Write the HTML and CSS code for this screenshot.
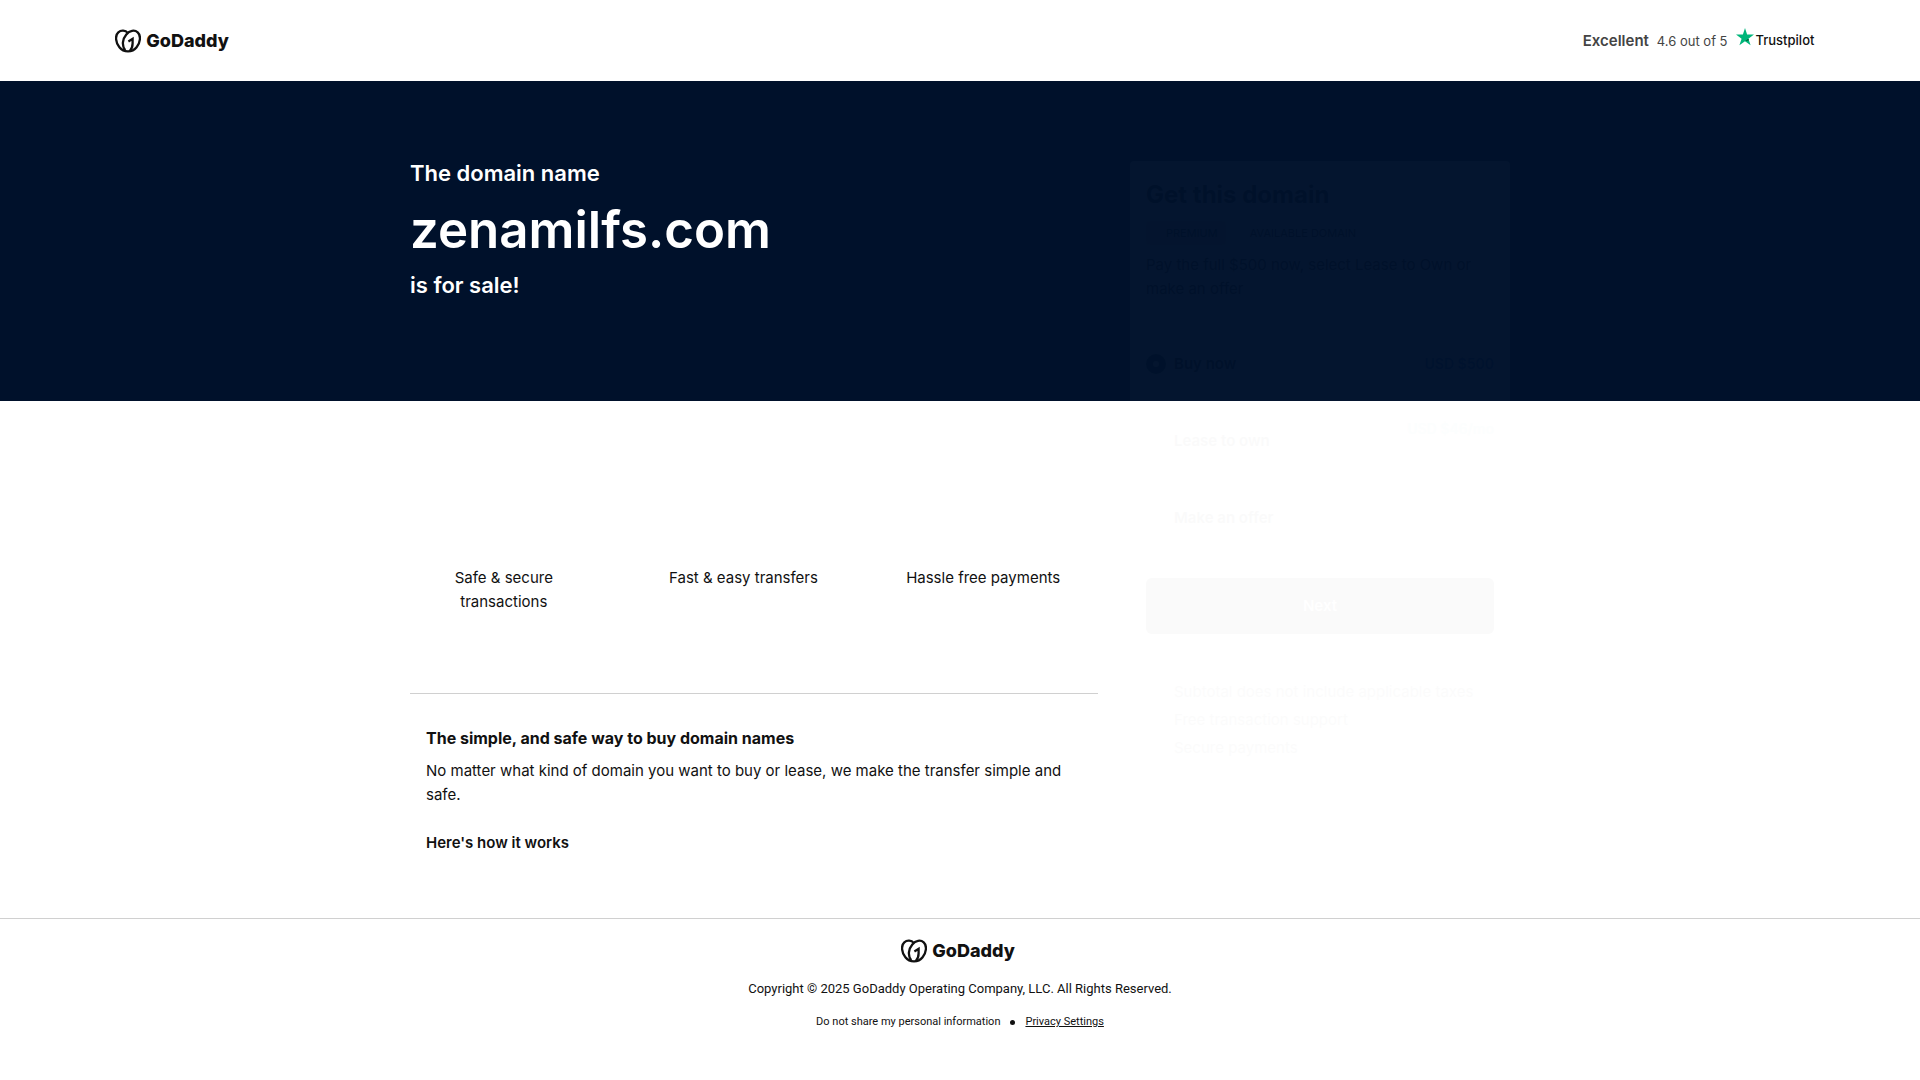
FILE: index.html
```html
<!DOCTYPE html>
<html lang="en">
<head>
<meta charset="utf-8">
<meta name="viewport" content="width=device-width, initial-scale=1">
<title>zenamilfs.com is for sale</title>
<link rel="stylesheet" href="styles.css">
</head>
<body>
<header class="header">
  <div class="logo">
    <svg class="logo-mark" viewBox="0 0 26 24" aria-hidden="true">
      <g fill="none" stroke="#111" stroke-width="2.300">
        <path d="M13 4.200C10.300 1 6 .9 3.300 3.300 -.2 6.500 .6 13.600 4.400 18.200 8.700 23.700 17.300 23.700 21.600 18.200 25.400 13.600 26.200 6.500 22.700 3.300 19.600 .6 14.600 1.400 11.300 5.400 7.400 10 6.600 16.600 10.200 21.300"/>
        <path d="M13.400 12.400 17.600 9.800V14.400C17.600 17.400 16.600 20 14.800 22"/>
      </g>
    </svg>
    <span class="logo-word">GoDaddy</span>
  </div>
  <div class="rating">
    <strong class="rating-label">Excellent</strong>
    <span class="rating-score">4.6 out of 5</span>
    <span class="trustpilot">
      <svg class="trustpilot-star" viewBox="0 0 18 18" aria-hidden="true">
        <path fill="#00b67a" d="M9 0 11.100 6.600H18L12.400 10.700 14.600 17.300 9 13.200 3.400 17.300 5.600 10.700 0 6.600H6.900Z"/>
        <path fill="#005128" d="M12.900 12.200 12.400 10.700 9 13.200Z"/>
      </svg>
      <span class="trustpilot-word">Trustpilot</span>
    </span>
  </div>
</header>

<main class="lander">
  <div class="band"></div>
  <section class="intro">
    <p class="intro-line">The domain name</p>
    <h1 class="domain">zenamilfs.com</h1>
    <p class="intro-line">is for sale!</p>
  </section>

  <form class="card">
    <h2 class="card-title">Get this domain</h2>
    <p class="badges"><span class="badge">PREMIUM</span><span>AVAILABLE DOMAIN</span></p>
    <p class="card-text">Pay the full $500 now, select Lease to Own or make an offer</p>
    <div class="options">
      <label class="option"><input class="radio" type="radio" name="plan" checked><span>Buy now</span><span class="price">USD $500</span></label>
      <label class="option"><input class="radio" type="radio" name="plan"><span>Lease to own</span><span class="price price-lease">USD $46/mo</span></label>
      <label class="option"><input class="radio" type="radio" name="plan"><span>Make an offer</span></label>
    </div>
    <button class="next" type="button">Next</button>
    <ul class="notes">
      <li>Subtotal does not include applicable taxes</li>
      <li>Free transaction support</li>
      <li>Secure payments</li>
    </ul>
  </form>

  <div class="details">
    <ul class="features">
      <li class="feature">Safe &amp; secure transactions</li>
      <li class="feature">Fast &amp; easy transfers</li>
      <li class="feature">Hassle free payments</li>
    </ul>
    <section class="about">
      <h2 class="about-title">The simple, and safe way to buy domain names</h2>
      <p class="about-text">No matter what kind of domain you want to buy or lease, we make the transfer simple and safe.</p>
      <button class="how" type="button">Here's how it works</button>
    </section>
  </div>
</main>

<footer class="footer">
  <div class="logo">
    <svg class="logo-mark" viewBox="0 0 26 24" aria-hidden="true">
      <g fill="none" stroke="#111" stroke-width="2.300">
        <path d="M13 4.200C10.300 1 6 .9 3.300 3.300 -.2 6.500 .6 13.600 4.400 18.200 8.700 23.700 17.300 23.700 21.600 18.200 25.400 13.600 26.200 6.500 22.700 3.300 19.600 .6 14.600 1.400 11.300 5.400 7.400 10 6.600 16.600 10.200 21.300"/>
        <path d="M13.400 12.400 17.600 9.800V14.400C17.600 17.400 16.600 20 14.800 22"/>
      </g>
    </svg>
    <span class="logo-word">GoDaddy</span>
  </div>
  <p class="copyright">Copyright © 2025 GoDaddy Operating Company, LLC. All Rights Reserved.</p>
  <p class="legal"><span>Do not share my personal information</span><span class="dot"></span><a class="privacy" href="#privacy">Privacy Settings</a></p>
</footer>
</body>
</html>
```
FILE: styles.css
```css
* { box-sizing: border-box; }

body {
  margin: 0;
  background: #fff;
  color: #111;
  font-family: Inter, "Liberation Sans", sans-serif;
  font-size: 15px;
  line-height: 24px;
}

h1, h2, p, ul { margin: 0; padding: 0; }
ul { list-style: none; }
button { border: 0; font: inherit; color: inherit; }

.header {
  display: flex;
  align-items: center;
  justify-content: space-between;
  height: 81px;
  padding: 0 5.5% 0 6%;
}

.logo { display: flex; align-items: center; gap: 5px; padding-right: 4px; }
.logo-mark { width: 26px; height: 24px; }
.logo-word { font-size: 18px; font-weight: 800; }

.rating { display: flex; align-items: center; gap: 8px; color: #444; }
.rating-label { font-weight: 600; }
.rating-score { font-size: 13px; }
.trustpilot { display: flex; align-items: center; gap: 2px; padding-bottom: 2px; color: #111; }
.trustpilot-star { width: 18px; height: 18px; margin-bottom: 6px; }
.trustpilot-word { font-size: 13px; font-weight: 500; }

.lander {
  display: grid;
  grid-template-columns: 1fr minmax(0, 688px) 380px 1fr;
  grid-template-rows: auto auto;
  column-gap: 32px;
  margin: 0 -32px;
}

.band { grid-area: 1 / 1 / 2 / -1; background: #00112b; }

.intro {
  grid-area: 1 / 2;
  padding: 76px 0 100px;
  color: #fff;
  font-weight: 600;
}
.intro-line { font-size: 22px; line-height: 32px; }
.domain { padding: 8px 0 6px; font-size: 51px; line-height: 66px; font-weight: 600; }

.card {
  grid-area: 1 / 3 / 3 / 4;
  align-self: start;
  margin-top: 80px;
  padding: 16px;
  border-radius: 4px;
  background: #fff;
  opacity: 0.015;
}
.card-title { font-size: 24px; line-height: 36px; font-weight: 700; }
.badges { display: flex; gap: 24px; align-items: center; padding: 8px 0; font-size: 11px; }
.badge { padding: 0 8px 0 20px; border-radius: 4px; background: #ddd; }
.options { padding: 24px 0 22px; }
.option { display: flex; align-items: center; gap: 8px; height: 77px; font-weight: 600; }
.radio {
  width: 20px;
  height: 20px;
  margin: 0;
  border-radius: 50%;
  appearance: none;
}
.radio:checked { border: 7px solid #004249; }
.price { margin-left: auto; color: #1976d2; font-size: 14px; }
.price-lease { padding-bottom: 24px; color: #8adfe0; }
.next {
  display: block;
  width: 100%;
  height: 56px;
  border-radius: 6px;
  background: #111;
  color: #fff;
  font-weight: 600;
}
.notes { padding: 44px 28px 0; color: #555; line-height: 28px; white-space: nowrap; }

.details { grid-area: 2 / 2; }
.features {
  display: grid;
  grid-template-columns: repeat(3, 1fr);
  gap: 84px;
  padding: 165px 37px 79px 16px;
  border-bottom: 1px solid #d0d0d0;
  text-align: center;
}
.about { padding: 32px 16px 63px; }
.about-title { font-size: 16px; line-height: 24px; font-weight: 700; }
.about-text { padding: 9px 0 24px; }
.how { padding: 0; background: none; font-weight: 600; }

.footer {
  display: flex;
  flex-direction: column;
  align-items: center;
  padding: 20px 16px;
  border-top: 1px solid #d0d0d0;
  font-family: Roboto, "Liberation Sans", sans-serif;
}
.footer .logo { font-family: Inter, "Liberation Sans", sans-serif; }
.copyright { padding: 14px 0 9px; font-size: 13px; }
.legal { display: flex; align-items: center; gap: 10px; font-size: 11px; }
.dot { width: 5px; height: 5px; border-radius: 50%; background: #111; }
.privacy { color: inherit; }
```
